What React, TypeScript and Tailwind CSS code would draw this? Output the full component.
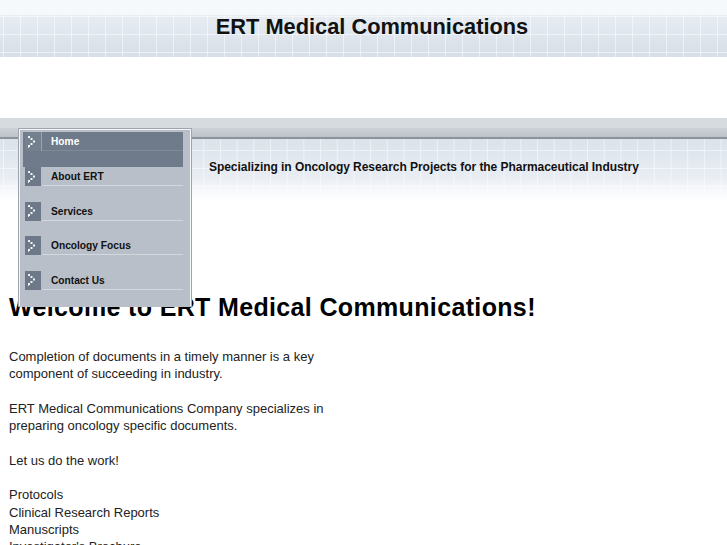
import type { ReactNode } from "react";

const menu = ["Home", "About ERT", "Services", "Oncology Focus", "Contact Us"];

function Chevron() {
  // dotted ">" glyph inside the grey square
  const dots = [
    [4, 3],
    [6.5, 5],
    [9, 7.5],
    [6.5, 10],
    [4, 12],
  ];
  return (
    <svg width="16" height="16" viewBox="0 0 16 16" className="block">
      {dots.map(([x, y], i) => (
        <rect key={i} x={x - 1} y={y - 1} width="2" height="2" fill="#f4f6f8" />
      ))}
      <rect x="3" y="2" width="1" height="1" fill="#dfe3e8" />
      <rect x="3" y="13" width="1" height="1" fill="#dfe3e8" />
    </svg>
  );
}

function MenuItem({ label, active }: { label: string; active?: boolean }): ReactNode {
  return (
    <div className={active ? "h-[35px] bg-[#6f7a8a]" : "h-[34.5px]"}>
      <div className="flex h-[19px] items-stretch">
        <div className={active ? "ml-[2px] flex w-[16px] items-center justify-center bg-[#75808f]" : "ml-[2px] flex w-[16px] items-center justify-center bg-[#6d7888]"}>
          <Chevron />
        </div>
        <div className={active ? "w-px bg-[#9aa3af]" : "w-px"} />
        <div
          className={
            active
              ? "flex flex-1 items-center border-b border-[#7f8a99] pl-[9px] text-[10.2px] font-bold text-white"
              : "flex flex-1 items-center border-b border-[#d3d8de] pl-[9px] text-[10.2px] font-bold text-[#111]"
          }
        >
          <span className="translate-y-[1px]">{label}</span>
        </div>
      </div>
    </div>
  );
}

export default function App() {
  return (
    <div className="relative min-h-screen overflow-hidden bg-white font-['Liberation_Sans',Arial,sans-serif]">
      <header className="flex h-[57px] items-center justify-center bg-[linear-gradient(#f5f9fc_15px,transparent_15px),linear-gradient(90deg,rgba(255,255,255,0.5)_1px,transparent_1px),linear-gradient(rgba(255,255,255,0.5)_1px,transparent_1px),linear-gradient(#edf2f7,#d7dee7)] bg-[size:100%_100%,17px_100%,100%_18px,100%_100%] bg-[position:0_0,3px_0,0_16px,0_0] pl-[17px]">
        <h1 className="pb-[3px] text-[21.8px] font-bold text-[#111]">ERT Medical Communications</h1>
      </header>

      <div className="h-[61px]" />

      <div className="h-[10px] bg-[#d6dbe0]" />
      <div className="h-[9px] bg-[linear-gradient(#cdd2d8,#bcc2c9)]" />
      <div className="h-[2px] bg-[#8d939a]" />
      <div className="flex h-[61px] items-center bg-[linear-gradient(90deg,rgba(255,255,255,0.5)_1px,transparent_1px),linear-gradient(rgba(255,255,255,0.5)_1px,transparent_1px),linear-gradient(#dbe2ea,#e8edf3_60%,#ffffff)] bg-[size:16.7px_100%,100%_18px,100%_100%] bg-[position:3px_0,0_11px,0_0] pl-[209px]">
        <p className="pb-[6px] text-[12px] font-bold tracking-[-0.05px] text-[#111]">
          Specializing in Oncology Research Projects for the Pharmaceutical Industry
        </p>
      </div>

      <main className="px-[9px]">
        <h2 className="mt-[93px] text-[25px] font-bold leading-[28px] tracking-[0.35px] text-black">
          Welcome to ERT Medical Communications!
        </h2>
        <p className="mt-[27px] text-[13px] leading-[17.3px] text-[#222]">
          Completion of documents in a timely manner is a key
          <br />
          component of succeeding in industry.
          <br />
          <br />
          ERT Medical Communications Company specializes in
          <br />
          preparing oncology specific documents.
          <br />
          <br />
          Let us do the work!
          <br />
          <br />
          Protocols
          <br />
          Clinical Research Reports
          <br />
          Manuscripts
          <br />
          Investigator's Brochure
        </p>
      </main>

      <nav className="absolute left-[18px] top-[128px] h-[179px] w-[174px] border border-[#a0a6ae] shadow-[inset_1px_1px_0_#f2f4f6,inset_-1px_-1px_0_#f2f4f6]">
        <div className="h-full bg-[#b9bfc8] px-[3px] pt-[2px] pr-[7px] [margin:1px]">
          {menu.map((m, i) => (
            <MenuItem key={m} label={m} active={i === 0} />
          ))}
        </div>
      </nav>
    </div>
  );
}
